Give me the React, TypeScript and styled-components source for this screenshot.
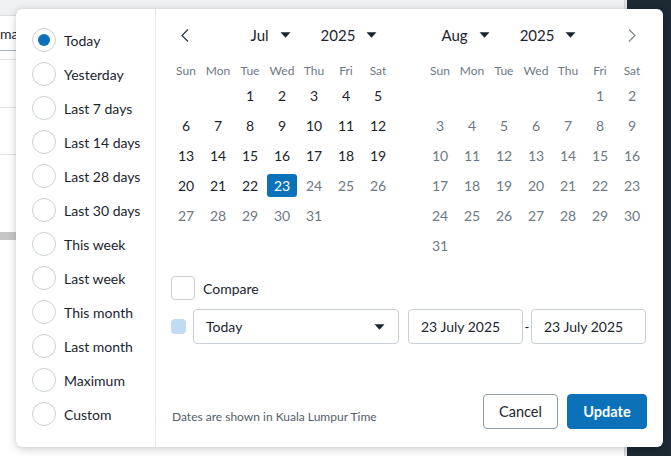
import React from "react";
import styled, { createGlobalStyle } from "styled-components";

const GlobalStyle = createGlobalStyle`
  html, body { margin: 0; padding: 0; }
  body {
    font-family: "Lato", "Open Sans", sans-serif;
    background: #ffffff;
    -webkit-font-smoothing: antialiased;
  }
  * { box-sizing: border-box; }
`;

const BLUE = "#0b72ba";
const DARK = "#1b2530";
const MUTED = "#6e7883";
const LINE = "#c8cfd6";

/* ---------- background page ---------- */
const Stage = styled.div`
  position: relative;
  width: 671px;
  height: 456px;
  overflow: hidden;
  display: flex;
`;

const MainArea = styled.div`
  width: 624px;
  display: flex;
  flex-direction: column;
  background: #eef0f2;
`;

const TopStrip = styled.div`
  height: 15px;
  background: #eef0f2;
`;

const Sheet = styled.div`
  flex: 1;
  background: #ffffff;
  border-top: 1px solid #d9dde1;
  display: flex;
  flex-direction: column;
  overflow: hidden;
`;

const SheetField = styled.div`
  height: 35px;
  display: flex;
  align-items: center;
  border-bottom: 1px solid #a7b2bd;
  font-size: 14px;
  color: ${DARK};
`;

const SheetRow = styled.div<{ $h: number }>`
  height: ${(p) => p.$h}px;
  border-bottom: 1px solid #dfe2e5;
  display: flex;
  align-items: center;
  justify-content: flex-end;
  font-size: 14px;
  color: ${DARK};
`;

const SheetBar = styled.div`
  height: 8px;
  margin-top: 77px;
  background: #c6c6c6;
`;

const ScrollEdge = styled.div`
  width: 3px;
  background: #e3e5e7;
  border-left: 1px solid #d0d3d6;
`;

const DarkRail = styled.div`
  flex: 1;
  background: #1d2a33;
`;

/* ---------- popup ---------- */
const Popup = styled.div`
  position: absolute;
  left: 16px;
  top: 9px;
  width: 647px;
  height: 438px;
  background: #ffffff;
  border-radius: 6px;
  box-shadow: 0 2px 10px rgba(0, 0, 0, 0.2), 0 0 1px rgba(0, 0, 0, 0.15);
  display: flex;
`;

const Presets = styled.div`
  width: 140px;
  border-right: 1px solid #e3e6e9;
  padding: 14px 0 0 16px;
  display: flex;
  flex-direction: column;
`;

const PresetItem = styled.label`
  height: 34px;
  display: flex;
  align-items: center;
  gap: 8px;
  font-size: 14px;
  color: ${DARK};
  cursor: pointer;
`;

const RadioCircle = styled.span<{ $on: boolean }>`
  width: 24px;
  height: 24px;
  border-radius: 50%;
  border: 1px solid ${LINE};
  display: flex;
  align-items: center;
  justify-content: center;
  flex-shrink: 0;
  &::after {
    content: "";
    width: 12px;
    height: 12px;
    border-radius: 50%;
    background: ${(p) => (p.$on ? BLUE : "transparent")};
  }
`;

const Main = styled.div`
  flex: 1;
  padding: 10px 15px 18px 14px;
  display: flex;
  flex-direction: column;
`;

const Calendars = styled.div`
  display: flex;
  gap: 30px;
  align-items: flex-start;
`;

const Calendar = styled.div`
  width: 224px;
  display: flex;
  flex-direction: column;
`;

const Header = styled.div<{ $navSide: "left" | "right" }>`
  height: 32px;
  display: flex;
  flex-direction: ${(p) => (p.$navSide === "left" ? "row" : "row-reverse")};
  align-items: center;
`;

const NavSlot = styled.div<{ $w: number; $side: "left" | "right" }>`
  width: ${(p) => p.$w}px;
  height: 32px;
  display: flex;
  align-items: center;
  justify-content: ${(p) => (p.$side === "left" ? "flex-start" : "flex-end")};
  padding: ${(p) => (p.$side === "left" ? "0 0 0 11px" : "0 12px 0 0")};
`;

const SelectGroup = styled.div`
  flex: 1;
  display: flex;
  justify-content: center;
  align-items: center;
  gap: 30px;
`;

const HeadSelect = styled.div`
  display: flex;
  align-items: center;
  gap: 11px;
  font-size: 15px;
  color: ${DARK};
`;

const Weekdays = styled.div`
  margin-top: 11px;
  height: 18px;
  display: grid;
  grid-template-columns: repeat(7, 32px);
  font-size: 12px;
  color: ${MUTED};
  text-align: center;
  line-height: 18px;
`;

const Days = styled.div`
  display: grid;
  grid-template-columns: repeat(7, 32px);
  grid-auto-rows: 30px;
`;

const DayCell = styled.div<{ $muted: boolean; $selected: boolean }>`
  display: flex;
  align-items: center;
  justify-content: center;
  font-size: 14px;
  color: ${(p) => (p.$selected ? "#ffffff" : p.$muted ? MUTED : DARK)};
  span {
    width: 30px;
    height: 23px;
    border-radius: 3px;
    display: flex;
    align-items: center;
    justify-content: center;
    background: ${(p) => (p.$selected ? BLUE : "transparent")};
  }
`;

const CompareRow = styled.label`
  margin-top: 16px;
  margin-left: 1px;
  height: 24px;
  display: flex;
  align-items: center;
  gap: 8px;
  font-size: 14px;
  color: ${DARK};
`;

const Checkbox = styled.span`
  width: 24px;
  height: 24px;
  border: 1px solid ${LINE};
  border-radius: 4px;
`;

const RangeRow = styled.div`
  margin-top: 9px;
  height: 35px;
  display: flex;
  align-items: center;
`;

const RangeDot = styled.span`
  width: 15px;
  height: 15px;
  margin-left: 1px;
  margin-right: 7px;
  border-radius: 4px;
  background: #c1dbf2;
`;

const Field = styled.div<{ $w: number }>`
  width: ${(p) => p.$w}px;
  height: 35px;
  border: 1px solid ${LINE};
  border-radius: 4px;
  padding: 0 13px 0 12px;
  display: flex;
  align-items: center;
  justify-content: space-between;
  font-size: 14px;
  color: ${DARK};
`;

const Gap = styled.span<{ $w: number }>`
  width: ${(p) => p.$w}px;
  text-align: center;
  font-size: 13px;
  color: ${DARK};
`;

const Footer = styled.div`
  margin-top: auto;
  display: flex;
  align-items: flex-end;
  justify-content: space-between;
  padding-right: 1px;
`;

const Note = styled.span`
  margin-left: 2px;
  margin-bottom: 4px;
  font-size: 12px;
  line-height: 16px;
  color: #55606b;
`;

const Buttons = styled.div`
  display: flex;
  gap: 9px;
`;

const Button = styled.button<{ $primary?: boolean; $w: number }>`
  width: ${(p) => p.$w}px;
  height: 35px;
  border-radius: 4px;
  font-family: inherit;
  font-size: 14.5px;
  font-weight: ${(p) => (p.$primary ? 700 : 400)};
  color: ${(p) => (p.$primary ? "#ffffff" : DARK)};
  background: ${(p) => (p.$primary ? BLUE : "#ffffff")};
  border: 1px solid ${(p) => (p.$primary ? BLUE : "#8f9ba7")};
  padding: 0;
  cursor: pointer;
`;

/* ---------- icons ---------- */
const Caret = () => (
  <svg width="11" height="6" viewBox="0 0 11 6" aria-hidden>
    <path d="M0.5 0.2 L10.5 0.2 L5.5 5.8 Z" fill="#1b2530" />
  </svg>
);

const Chevron = ({ dir, color }: { dir: "left" | "right"; color: string }) => (
  <svg width="8" height="13" viewBox="0 0 8 13" aria-hidden>
    <path
      d={dir === "left" ? "M7 0.5 L1 6.5 L7 12.5" : "M1 0.5 L7 6.5 L1 12.5"}
      fill="none"
      stroke={color}
      strokeWidth="1.2"
    />
  </svg>
);

/* ---------- data ---------- */
const PRESETS = [
  "Today",
  "Yesterday",
  "Last 7 days",
  "Last 14 days",
  "Last 28 days",
  "Last 30 days",
  "This week",
  "Last week",
  "This month",
  "Last month",
  "Maximum",
  "Custom",
];

const WEEKDAYS = ["Sun", "Mon", "Tue", "Wed", "Thu", "Fri", "Sat"];

type MonthSpec = {
  label: string;
  year: number;
  offset: number;
  days: number;
  lastActive: number;
  selected?: number;
  nav: "left" | "right";
  navWidth: number;
};

const MONTHS: MonthSpec[] = [
  { label: "Jul", year: 2025, offset: 2, days: 31, lastActive: 23, selected: 23, nav: "left", navWidth: 64 },
  { label: "Aug", year: 2025, offset: 5, days: 31, lastActive: 0, nav: "right", navWidth: 54 },
];

const MonthView = ({ m }: { m: MonthSpec }) => {
  const cells: (number | null)[] = [
    ...Array.from({ length: m.offset }, () => null),
    ...Array.from({ length: m.days }, (_, i) => i + 1),
  ];
  return (
    <Calendar>
      <Header $navSide={m.nav}>
        <NavSlot $w={m.navWidth} $side={m.nav}>
          <Chevron dir={m.nav} color={m.nav === "left" ? "#2a333c" : "#7d868f"} />
        </NavSlot>
        <SelectGroup>
          <HeadSelect>
            {m.label}
            <Caret />
          </HeadSelect>
          <HeadSelect>
            {m.year}
            <Caret />
          </HeadSelect>
        </SelectGroup>
      </Header>
      <Weekdays>
        {WEEKDAYS.map((d) => (
          <span key={d}>{d}</span>
        ))}
      </Weekdays>
      <Days>
        {cells.map((d, i) => (
          <DayCell key={i} $muted={d !== null && d > m.lastActive} $selected={d === m.selected}>
            {d !== null && <span>{d}</span>}
          </DayCell>
        ))}
      </Days>
    </Calendar>
  );
};

export default function App() {
  return (
    <>
      <GlobalStyle />
      <Stage>
        <MainArea>
          <TopStrip />
          <Sheet>
            <SheetField>mary</SheetField>
            <SheetRow $h={9} />
            <SheetRow $h={48}>
              <Caret />
            </SheetRow>
            <SheetRow $h={47}>…</SheetRow>
            <SheetBar />
          </Sheet>
        </MainArea>
        <ScrollEdge />
        <DarkRail />

        <Popup>
          <Presets>
            {PRESETS.map((p, i) => (
              <PresetItem key={p}>
                <RadioCircle $on={i === 0} />
                {p}
              </PresetItem>
            ))}
          </Presets>
          <Main>
            <Calendars>
              {MONTHS.map((m) => (
                <MonthView key={m.label} m={m} />
              ))}
            </Calendars>
            <CompareRow>
              <Checkbox />
              Compare
            </CompareRow>
            <RangeRow>
              <RangeDot />
              <Field $w={206}>
                Today
                <Caret />
              </Field>
              <Gap $w={9} />
              <Field $w={115}>23 July 2025</Field>
              <Gap $w={8}>-</Gap>
              <Field $w={115}>23 July 2025</Field>
            </RangeRow>
            <Footer>
              <Note>Dates are shown in Kuala Lumpur Time</Note>
              <Buttons>
                <Button $w={75}>Cancel</Button>
                <Button $w={80} $primary>
                  Update
                </Button>
              </Buttons>
            </Footer>
          </Main>
        </Popup>
      </Stage>
    </>
  );
}
